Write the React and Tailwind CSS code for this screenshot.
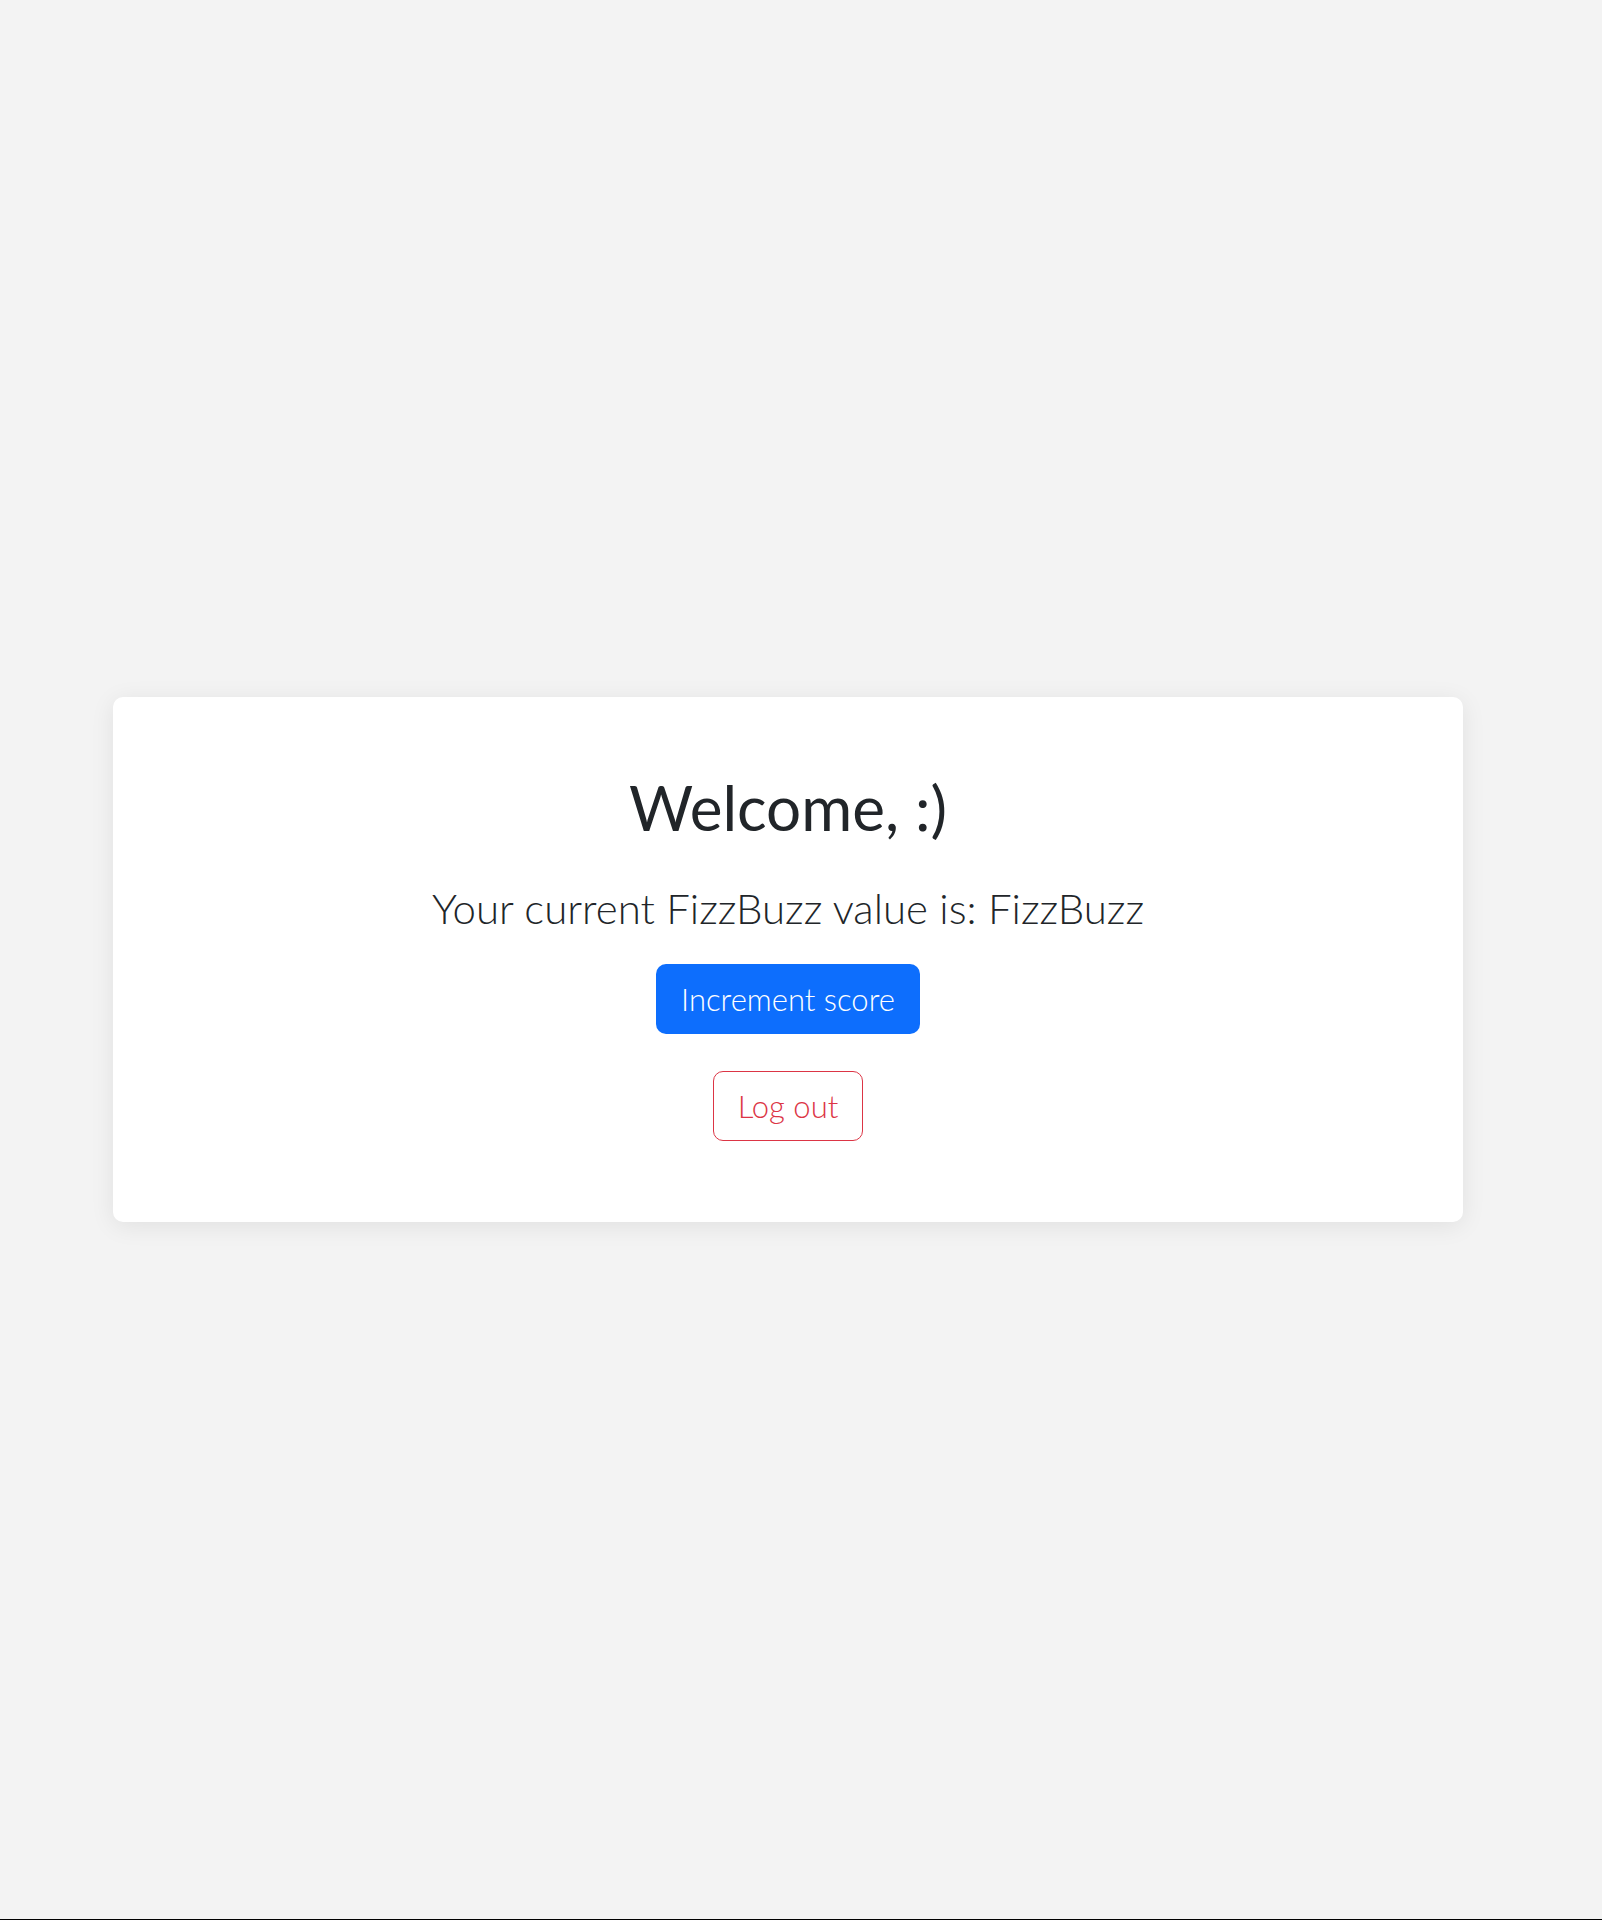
export default function App() {
  return (
    <div className="flex flex-col bg-black" style={{ fontFamily: "Lato, 'Noto Sans', sans-serif" }}>
      <div className="h-[1919px] bg-[#f3f3f3] flex items-center pl-[113px] pr-[139px]">
        <div className="w-full h-[525px] bg-white rounded-[10px] shadow-[0_4px_24px_rgba(0,0,0,0.08)] flex flex-col items-center pt-[74px]">
          <h1 className="text-[62px] leading-[72px] font-normal text-[#212529]">Welcome, :)</h1>
          <p className="mt-[41px] text-[42px] leading-[48px] font-light text-[#212529]">Your current FizzBuzz value is: FizzBuzz</p>
          <button className="mt-[32px] h-[70px] px-[25px] rounded-[10px] bg-[#0d6efd] text-white text-[31px] font-light">Increment score</button>
          <button className="mt-[37px] h-[70px] px-[24px] rounded-[10px] border border-[#dc3545] text-[#dc3545] text-[31px] font-light">Log out</button>
        </div>
      </div>
      <div className="h-px bg-black" />
    </div>
  );
}
